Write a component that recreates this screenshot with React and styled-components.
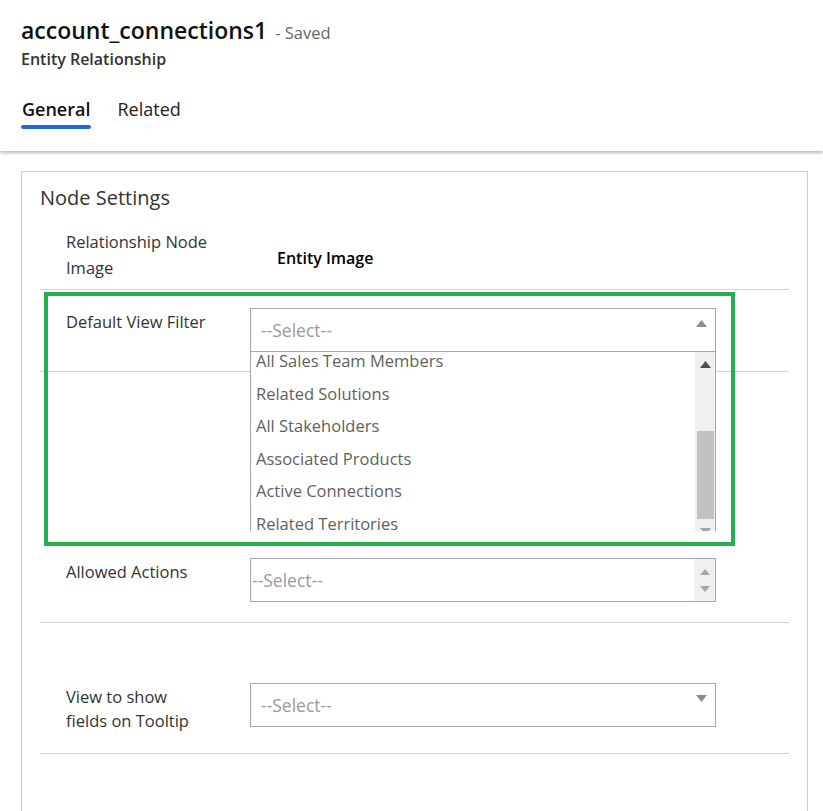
import styled, { createGlobalStyle } from "styled-components"

const GlobalStyle = createGlobalStyle`
    body {
        margin: 0;
        background: #ffffff;
        font-family: "Open Sans", "Noto Sans", Arial, sans-serif;
        color: #333333;
    }
`

const Page = styled.div`
    width: 823px;
    height: 811px;
    overflow: hidden;
    background: #ffffff;
`

const Header = styled.header`
    padding: 14px 21px 0;
    height: 151px;
    box-sizing: border-box;
    box-shadow: 0 2px 3px rgba(0, 0, 0, 0.28);
    position: relative;
`
const TitleRow = styled.div`
    display: flex;
    align-items: baseline;
    gap: 8px;
`
const Title = styled.h1`
    margin: 0;
    font-size: 23px;
    font-weight: 600;
    color: #111111;
    line-height: 32px;
`
const Saved = styled.span`
    font-size: 16.5px;
    color: #666666;
`
const SubTitle = styled.p`
    margin: 0;
    font-size: 16px;
    font-weight: 600;
    color: #333333;
    line-height: 26px;
`
const Tabs = styled.nav`
    display: flex;
    gap: 25px;
    margin-top: 25px;
`
const Tab = styled.div`
    font-size: 18px;
    font-weight: ${(p) => (p.$active ? 600 : 400)};
    color: ${(p) => (p.$active ? "#111111" : "#222222")};
    padding: 0 1px 8px;
    position: relative;
    line-height: 24px;
    &::after {
        content: "";
        display: ${(p) => (p.$active ? "block" : "none")};
        position: absolute;
        left: 0;
        right: 0;
        bottom: 0;
        height: 4px;
        border-radius: 2px;
        background: #2266e3;
    }
`

const Content = styled.main`
    padding: 20px 15px 0 21px;
`
const Card = styled.section`
    position: relative;
    border: 1px solid #cccccc;
    border-bottom: none;
    padding: 0 18px;
    height: 700px;
`
const SectionTitle = styled.h2`
    margin: 0;
    padding-top: 13px;
    font-size: 20px;
    font-weight: 400;
    color: #333333;
    line-height: 26px;
`
const Row = styled.div`
    display: grid;
    grid-template-columns: 210px 466px;
    align-items: ${(p) => (p.$center ? "center" : "start")};
    padding: ${(p) => p.$pad};
    border-bottom: 1px solid #d0d0d0;
`
const Label = styled.div`
    padding-left: 26px;
    padding-top: ${(p) => (p.$center ? "0" : "2px")};
    font-size: 16.5px;
    line-height: ${(p) => (p.$center ? "26px" : "24px")};
    color: #333333;
`
const Value = styled.div`
    padding: 6px 0 0 27px;
    font-size: 16px;
    font-weight: 600;
    color: #000000;
`
const SelectBox = styled.div`
    position: relative;
    height: 44px;
    box-sizing: border-box;
    border: 1px solid #a6a6a6;
    display: flex;
    align-items: center;
    padding-left: ${(p) => p.$indent}px;
    font-size: 17.5px;
    color: #9a9a9a;
`
const Caret = styled.svg`
    position: absolute;
    right: 8px;
    top: 11px;
`
const Spinner = styled.div`
    position: absolute;
    right: 0;
    top: 0;
    bottom: 0;
    width: 21px;
    background: #f0f0f0;
    display: flex;
    flex-direction: column;
    justify-content: space-around;
    align-items: center;
    padding: 4px 0;
    box-sizing: border-box;
`

const ListPanel = styled.div`
    position: absolute;
    left: -1px;
    right: -1px;
    top: 43px;
    height: 179px;
    overflow: hidden;
    background: #ffffff;
    border-left: 1px solid #a6a6a6;
    border-right: 1px solid #a6a6a6;
    z-index: 2;
`
const ListItems = styled.ul`
    list-style: none;
    margin: -7px 0 0;
    padding: 0;
`
const ListItem = styled.li`
    padding-left: 5px;
    font-size: 16.5px;
    line-height: 32.5px;
    color: #5f5f5f;
    white-space: nowrap;
`
const ScrollTrack = styled.div`
    position: absolute;
    right: 0;
    top: 0;
    bottom: 0;
    width: 20px;
    background: #f0f0f0;
`
const ScrollThumb = styled.div`
    position: absolute;
    left: 2px;
    right: 1px;
    top: 79px;
    height: 88px;
    background: #c1c1c1;
`
const ScrollArrow = styled.svg`
    position: absolute;
    left: 5px;
    ${(p) => (p.$down ? "bottom: -4px;" : "top: 9px;")}
`

const Highlight = styled.div`
    position: absolute;
    left: 22px;
    top: 120px;
    width: 691px;
    height: 254px;
    box-sizing: border-box;
    border: 4px solid #22b14c;
    pointer-events: none;
    z-index: 3;
`

function Triangle({ up = true, color = "#8a8a8a" }) {
    return (
        <Caret width="11" height="7" viewBox="0 0 11 7">
            <polygon points={up ? "0,7 11,7 5.5,0" : "0,0 11,0 5.5,7"} fill={color} />
        </Caret>
    )
}

const options = [
    "All Sales Team Members",
    "Related Solutions",
    "All Stakeholders",
    "Associated Products",
    "Active Connections",
    "Related Territories",
]

export default function App() {
    return (
        <Page>
            <GlobalStyle />
            <Header>
                <TitleRow>
                    <Title>account_connections1</Title>
                    <Saved>- Saved</Saved>
                </TitleRow>
                <SubTitle>Entity Relationship</SubTitle>
                <Tabs>
                    <Tab $active>General</Tab>
                    <Tab>Related</Tab>
                </Tabs>
            </Header>
            <Content>
                <Card>
                    <SectionTitle>Node Settings</SectionTitle>
                    <Row $center $pad="18px 0 8px">
                        <Label $center>Relationship Node<br />Image</Label>
                        <Value>Entity Image</Value>
                    </Row>
                    <Row $pad="18px 0 19px">
                        <Label>Default View Filter</Label>
                        <SelectBox $indent={10}>
                            <span>--Select--</span>
                            <Triangle up color="#8c8c8c" />
                            <ListPanel>
                                <ListItems>
                                    {options.map((o) => (
                                        <ListItem key={o}>{o}</ListItem>
                                    ))}
                                </ListItems>
                                <ScrollTrack>
                                    <ScrollArrow width="11" height="7" viewBox="0 0 11 7">
                                        <polygon points="0,7 11,7 5.5,0" fill="#505050" />
                                    </ScrollArrow>
                                    <ScrollThumb />
                                    <ScrollArrow $down width="11" height="7" viewBox="0 0 11 7">
                                        <polygon points="0,0 11,0 5.5,7" fill="#a3a3a3" />
                                    </ScrollArrow>
                                </ScrollTrack>
                            </ListPanel>
                        </SelectBox>
                    </Row>
                    <Row $pad="186px 0 20px">
                        <Label>Allowed Actions</Label>
                        <SelectBox $indent={1}>
                            <span>--Select--</span>
                            <Spinner>
                                <svg width="10" height="6" viewBox="0 0 10 6">
                                    <polygon points="0,6 10,6 5,0" fill="#a6a6a6" />
                                </svg>
                                <svg width="10" height="6" viewBox="0 0 10 6">
                                    <polygon points="0,0 10,0 5,6" fill="#a6a6a6" />
                                </svg>
                            </Spinner>
                        </SelectBox>
                    </Row>
                    <Row $pad="60px 0 20px">
                        <Label>View to show<br />fields on Tooltip</Label>
                        <SelectBox $indent={10}>
                            <span>--Select--</span>
                            <Triangle up={false} color="#8c8c8c" />
                        </SelectBox>
                    </Row>
                    <Highlight />
                </Card>
            </Content>
        </Page>
    )
}
